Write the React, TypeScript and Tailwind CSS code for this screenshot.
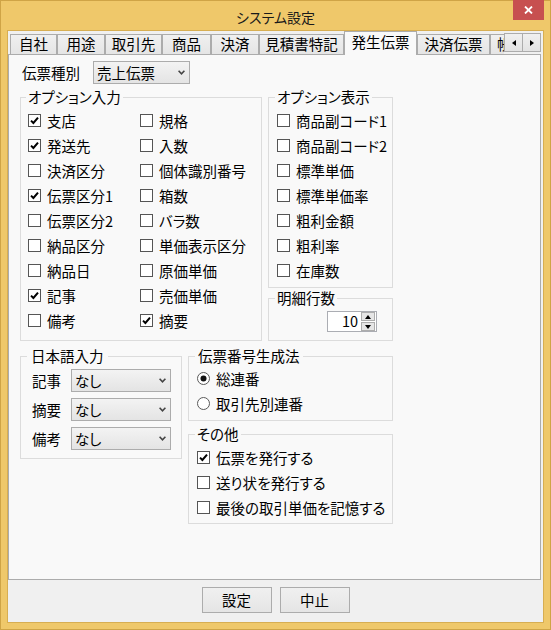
import React from 'react';

const tabs = [
  { label: '自社', w: 'w-[47px]' },
  { label: '用途', w: 'w-[48px]' },
  { label: '取引先', w: 'w-[57px]' },
  { label: '商品', w: 'w-[49px]' },
  { label: '決済', w: 'w-[48px]' },
  { label: '見積書特記', w: 'w-[85px]' },
  { label: '発生伝票', w: 'w-[73px]', active: true },
  { label: '決済伝票', w: 'w-[73px]' },
];

const optionInput: [string, boolean][] = [
  ['支店', true], ['規格', false],
  ['発送先', true], ['入数', false],
  ['決済区分', false], ['個体識別番号', false],
  ['伝票区分1', true], ['箱数', false],
  ['伝票区分2', false], ['バラ数', false],
  ['納品区分', false], ['単価表示区分', false],
  ['納品日', false], ['原価単価', false],
  ['記事', true], ['売価単価', false],
  ['備考', false], ['摘要', true],
];

const optionView = ['商品副コード1', '商品副コード2', '標準単価', '標準単価率', '粗利金額', '粗利率', '在庫数'];

const CheckBox = ({ checked }: { checked?: boolean }) => (
  <span className="w-[13px] h-[13px] shrink-0 border border-[#555555] bg-white flex items-center justify-center">
    {checked && (
      <svg width="9" height="9" viewBox="0 0 9 9">
        <path d="M1 4.6 L3.4 7 L8 1.6" fill="none" stroke="#000" strokeWidth="2" />
      </svg>
    )}
  </span>
);

const Radio = ({ checked }: { checked?: boolean }) => (
  <svg width="13" height="13" viewBox="0 0 13 13" className="shrink-0">
    <circle cx="6.5" cy="6.5" r="6" fill="#fff" stroke="#5a5a5a" />
    {checked && <circle cx="6.5" cy="6.5" r="3" fill="#111" />}
  </svg>
);

const CheckRow = ({ label, checked }: { label: string; checked?: boolean }) => (
  <div className="flex items-center gap-[6px] h-[25px]">
    <CheckBox checked={checked} />
    <span className="leading-[25px] whitespace-nowrap">{label}</span>
  </div>
);

const Combo = ({ value, className }: { value: string; className: string }) => (
  <div className={`${className} h-[23px] border border-[#acacac] bg-linear-to-b from-[#f3f3f3] to-[#e4e4e4] flex items-center justify-between pl-[3px] pr-[4px]`}>
    <span className="leading-[21px]">{value}</span>
    <svg width="7" height="5" viewBox="0 0 7 5">
      <path d="M0.6 0.8 L3.5 3.8 L6.4 0.8" fill="none" stroke="#444" strokeWidth="1.6" />
    </svg>
  </div>
);

const Group = ({ title, legend, className, children }: { title: string; legend: string; className: string; children: React.ReactNode }) => (
  <fieldset className={`border border-[#dcdcdc] min-w-0 ${className}`}>
    <legend className={`${legend} leading-[16px]`}>{title}</legend>
    {children}
  </fieldset>
);

const Tri = ({ dir }: { dir: 'up' | 'down' | 'left' | 'right' }) => {
  const d = {
    up: 'M0 4 L3 0 L6 4 Z',
    down: 'M0 0 L6 0 L3 4 Z',
    left: 'M4 0 L4 6 L0 3 Z',
    right: 'M0 0 L4 3 L0 6 Z',
  }[dir];
  const horiz = dir === 'up' || dir === 'down';
  return (
    <svg width={horiz ? 6 : 4} height={horiz ? 4 : 6} viewBox={horiz ? '0 0 6 4' : '0 0 4 6'}>
      <path d={d} fill="#000" />
    </svg>
  );
};

export default function App() {
  return (
    <div className="w-[551px] h-[630px] bg-[#efc86a] border border-[#cfa446] flex flex-col font-['Noto_Sans_CJK_JP',sans-serif] text-[14.5px] text-black [font-feature-settings:'palt']">
      {/* title bar */}
      <div className="grid grid-cols-[1fr_auto_1fr] h-[30px]">
        <div />
        <span className="self-center text-[14px] leading-none text-[#1a1a1a] pt-[1px]">システム設定</span>
        <div className="justify-self-end -mt-px mr-[6px] w-[31px] h-[20px] bg-[#c75050] flex items-center justify-center">
          <svg width="9" height="8" viewBox="0 0 9 8">
            <path d="M1 0.5 L8 7.5 M8 0.5 L1 7.5" stroke="#fff" strokeWidth="1.8" />
          </svg>
        </div>
      </div>

      {/* client */}
      <div className="mx-[7px] h-[591px] bg-[#f0f0f0] flex flex-col shadow-[0_0_0_1px_#d7ae52]">
        <div className="w-[533px] flex flex-col">
          {/* tab strip */}
          <div className="h-[23px] flex items-end">
            <div className="flex items-end pl-[2px]">
              {tabs.map((t) =>
                t.active ? (
                  <div
                    key={t.label}
                    className={`${t.w} relative z-10 h-[24px] -mb-px bg-[#f9f9f9] border border-b-0 border-[#acacac] flex items-center justify-center leading-none pb-[2px]`}
                  >
                    {t.label}
                  </div>
                ) : (
                  <div
                    key={t.label}
                    className={`${t.w} h-[20px] bg-linear-to-b from-[#f0f0f0] to-[#e5e5e5] border border-b-0 border-[#acacac] flex items-center justify-center leading-none`}
                  >
                    {t.label}
                  </div>
                )
              )}
              <div className="w-[14px] h-[20px] overflow-hidden bg-linear-to-b from-[#f0f0f0] to-[#e5e5e5] border-l border-t border-[#acacac] flex items-center leading-none pl-[6px] whitespace-nowrap">
                帳票
              </div>
            </div>
            <div className="flex mb-[2px]">
              <div className="w-[19px] h-[19px] border border-[#acacac] bg-linear-to-b from-[#f0f0f0] to-[#e3e3e3] flex items-center justify-center">
                <Tri dir="left" />
              </div>
              <div className="w-[18px] h-[19px] border border-l-0 border-[#acacac] bg-linear-to-b from-[#f0f0f0] to-[#e3e3e3] flex items-center justify-center">
                <Tri dir="right" />
              </div>
            </div>
          </div>

          {/* panel */}
          <div className="h-[526px] border border-[#acacac] bg-[#f9f9f9] pl-[11px] flex flex-col">
            <div className="mt-[6px] h-[23px] flex items-center">
              <span className="ml-[2px] w-[71px] leading-[23px]">伝票種別</span>
              <Combo value="売上伝票" className="w-[97px]" />
            </div>

            <div className="mt-[5px] flex gap-[6px]">
              <Group title="オプション入力" legend="ml-[5px] px-[2px]" className="w-[242px]">
                <div className="pt-[3px] pb-[7px] pl-[7px] grid grid-cols-[112px_1fr]">
                  {optionInput.map(([label, checked]) => (
                    <CheckRow key={label} label={label} checked={checked} />
                  ))}
                </div>
              </Group>

              <div className="w-[125px] flex flex-col gap-[2px]">
                <Group title="オプション表示" legend="ml-[6px] px-[2px]" className="w-full">
                  <div className="pt-[3px] pb-[4px] pl-[8px] flex flex-col">
                    {optionView.map((label) => (
                      <CheckRow key={label} label={label} />
                    ))}
                  </div>
                </Group>
                <Group title="明細行数" legend="ml-[6px] px-[2px]" className="w-full">
                  <div className="pt-[5px] pb-[8px] pr-[15px] flex justify-end">
                    <div className="w-[50px] h-[21px] border border-[#abadb3] bg-white flex items-center justify-end">
                      <span className="leading-none mr-[3px]">10</span>
                      <div className="flex flex-col gap-[1px] mr-px">
                        <div className="w-[14px] h-[9px] border border-[#adadad] bg-[#e6e6e6] flex items-center justify-center">
                          <Tri dir="up" />
                        </div>
                        <div className="w-[14px] h-[9px] border border-[#adadad] bg-[#e6e6e6] flex items-center justify-center">
                          <Tri dir="down" />
                        </div>
                      </div>
                    </div>
                  </div>
                </Group>
              </div>
            </div>

            <div className="mt-[7px] flex gap-[6px] items-start">
              <Group title="日本語入力" legend="ml-[6px] px-[4px]" className="w-[162px]">
                <div className="pt-[5px] pb-[8px] pl-[11px] flex flex-col gap-[6px]">
                  {['記事', '摘要', '備考'].map((label) => (
                    <div key={label} className="h-[23px] flex items-center">
                      <span className="w-[39px] leading-[23px]">{label}</span>
                      <Combo value="なし" className="w-[100px]" />
                    </div>
                  ))}
                </div>
              </Group>

              <div className="w-[205px] flex flex-col gap-[5px]">
                <Group title="伝票番号生成法" legend="ml-[6px] px-[3px]" className="w-full">
                  <div className="pt-[2px] pb-[4px] pl-[8px] flex flex-col">
                    <div className="h-[25px] flex items-center gap-[6px]">
                      <Radio checked />
                      <span className="leading-[25px]">総連番</span>
                    </div>
                    <div className="h-[25px] flex items-center gap-[6px]">
                      <Radio />
                      <span className="leading-[25px]">取引先別連番</span>
                    </div>
                  </div>
                </Group>
                <Group title="その他" legend="ml-[6px] px-[2px]" className="w-full">
                  <div className="pt-[3px] pb-[3px] pl-[8px] flex flex-col">
                    <CheckRow label="伝票を発行する" checked />
                    <CheckRow label="送り状を発行する" />
                    <CheckRow label="最後の取引単価を記憶する" />
                  </div>
                </Group>
              </div>
            </div>
          </div>
        </div>

        {/* buttons */}
        <div className="flex justify-center gap-[8px] pt-[7px]">
          <button className="w-[70px] h-[26px] border border-[#acacac] bg-linear-to-b from-[#f0f0f0] to-[#e5e5e5] leading-none">設定</button>
          <button className="w-[70px] h-[26px] border border-[#acacac] bg-linear-to-b from-[#f0f0f0] to-[#e5e5e5] leading-none">中止</button>
        </div>
      </div>
    </div>
  );
}
